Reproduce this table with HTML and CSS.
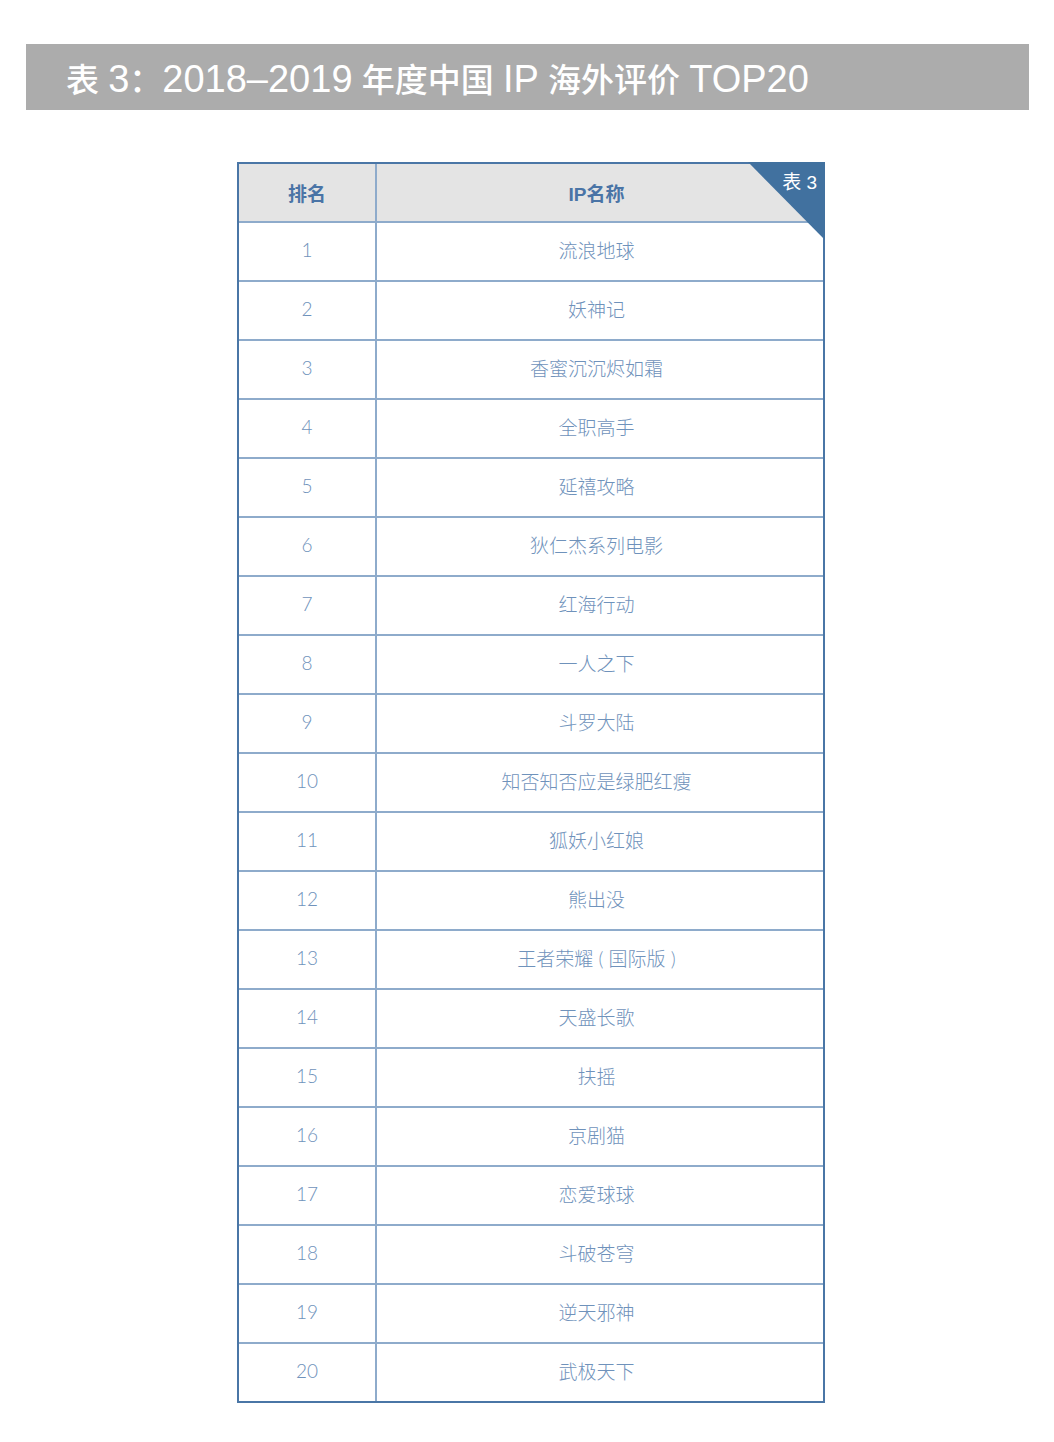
FILE: index.html
```html
<!DOCTYPE html>
<html lang="zh">
<head>
<meta charset="utf-8">
<title>表 3</title>
<link rel="stylesheet" href="styles.css">
</head>
<body>
<div class="banner"><h1>表 <span class="lat">3</span>：<span class="lat">2018–2019</span> 年度中国 <span class="lat">IP</span> 海外评价 <span class="lat">TOP20</span></h1></div>
<div class="wrap">
  <div class="tbl">
    <div class="corner"></div>
    <span class="corner-label">表 3</span>
    <div class="row head"><div class="c1">排名</div><div class="c2">IP名称</div></div>
    <div class="row"><div class="c1">1</div><div class="c2">流浪地球</div></div>
    <div class="row"><div class="c1">2</div><div class="c2">妖神记</div></div>
    <div class="row"><div class="c1">3</div><div class="c2">香蜜沉沉烬如霜</div></div>
    <div class="row"><div class="c1">4</div><div class="c2">全职高手</div></div>
    <div class="row"><div class="c1">5</div><div class="c2">延禧攻略</div></div>
    <div class="row"><div class="c1">6</div><div class="c2">狄仁杰系列电影</div></div>
    <div class="row"><div class="c1">7</div><div class="c2">红海行动</div></div>
    <div class="row"><div class="c1">8</div><div class="c2">一人之下</div></div>
    <div class="row"><div class="c1">9</div><div class="c2">斗罗大陆</div></div>
    <div class="row"><div class="c1">10</div><div class="c2">知否知否应是绿肥红瘦</div></div>
    <div class="row"><div class="c1">11</div><div class="c2">狐妖小红娘</div></div>
    <div class="row"><div class="c1">12</div><div class="c2">熊出没</div></div>
    <div class="row"><div class="c1">13</div><div class="c2">王者荣耀 ( 国际版 )</div></div>
    <div class="row"><div class="c1">14</div><div class="c2">天盛长歌</div></div>
    <div class="row"><div class="c1">15</div><div class="c2">扶摇</div></div>
    <div class="row"><div class="c1">16</div><div class="c2">京剧猫</div></div>
    <div class="row"><div class="c1">17</div><div class="c2">恋爱球球</div></div>
    <div class="row"><div class="c1">18</div><div class="c2">斗破苍穹</div></div>
    <div class="row"><div class="c1">19</div><div class="c2">逆天邪神</div></div>
    <div class="row"><div class="c1">20</div><div class="c2">武极天下</div></div>
  </div>
</div>
</body>
</html>
```
FILE: styles.css
```css
* { box-sizing: border-box; }
body {
  margin: 0;
  background: #fff;
  font-family: "Liberation Sans", "Noto Sans CJK SC", sans-serif;
}
.banner {
  margin: 44px 25px 0 26px;
  height: 66px;
  background: #acacac;
  display: flex;
  align-items: center;
  padding-left: 40px;
  padding-top: 4px;
}
.banner h1 {
  margin: 0;
  color: #fff;
  font-size: 33px;
  font-weight: 500;
  white-space: nowrap;
  line-height: 1;
}
.banner .lat {
  font-size: 38px;
  font-weight: 400;
}
.wrap {
  margin-top: 52px;
  padding-left: 237px;
}
.tbl {
  position: relative;
  width: 588px;
  border: 2px solid #4a76a6;
}
.row {
  display: grid;
  grid-template-columns: 138px 1fr;
  height: 59px;
  border-bottom: 2px solid #8eabcb;
}
.row:last-child { border-bottom: none; height: 57px; }
.row > div {
  display: flex;
  align-items: center;
  justify-content: center;
  padding-bottom: 4px;
  color: #6f92bb;
  font-family: "Lato", "Noto Sans CJK SC", sans-serif;
  font-size: 19px;
  font-weight: 300;
}
.row .c1 { border-right: 2px solid #8eabcb; }
.row .c2 { padding-right: 7px; }
.row.head { background: #e4e4e4; }
.row.head > div {
  color: #4a74a6;
  font-family: "Liberation Sans", "Noto Sans CJK SC", sans-serif;
  font-weight: 700;
  font-size: 19px;
  padding-bottom: 0;
}
.corner {
  position: absolute;
  top: -2px;
  right: -2px;
  width: 77px;
  height: 78px;
  background: #41719f;
  clip-path: polygon(0 0, 100% 0, 100% 100%);
  z-index: 1;
}
.corner-label {
  position: absolute;
  top: 3px;
  right: 6px;
  color: #fff;
  font-size: 19px;
  z-index: 2;
}
```
